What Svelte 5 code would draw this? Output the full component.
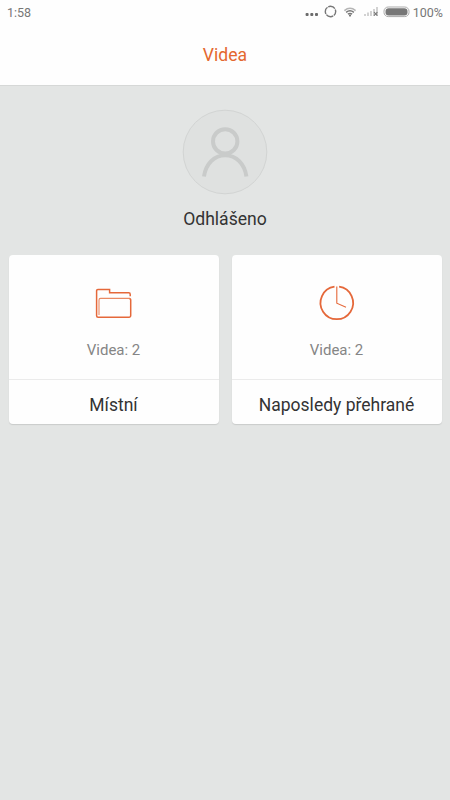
<script lang="ts">
	interface Card {
		icon: 'folder' | 'clock';
		count: number;
		title: string;
	}

	const cards: Card[] = [
		{ icon: 'folder', count: 2, title: 'Místní' },
		{ icon: 'clock', count: 2, title: 'Naposledy přehrané' }
	];
</script>

<div class="screen">
	<header>
		<div class="status">
			<span class="time">1:58</span>
			<!-- notification dots, sync, wifi, signal, battery -->
			<svg class="indicators" width="108" height="24" viewBox="302 0 108 24" aria-hidden="true">
				<g fill="#6c6c6c">
					<rect x="305.6" y="13" width="3" height="3" rx="0.9" />
					<rect x="310.3" y="13" width="3" height="3" rx="0.9" />
					<rect x="315" y="13" width="3" height="3" rx="0.9" />
				</g>
				<circle
					cx="330.5"
					cy="11.5"
					r="5.2"
					fill="none"
					stroke="#777"
					stroke-width="1.4"
					stroke-dasharray="7.4 0.77"
					stroke-dashoffset="3"
				/>
				<g fill="none" stroke-width="1.5">
					<path d="M344.4 10.6q5.6-4.6 11.2 0" stroke="#b5b5b5" />
					<path d="M346.1 12.3q3.9-3 7.8 0" stroke="#777" />
					<path d="M347.9 14.2q2.1-1.6 4.2 0" stroke="#777" />
				</g>
				<circle cx="350" cy="15.6" r="1.1" fill="#777" />
				<g fill="#d2d2d2">
					<rect x="364" y="14" width="2" height="2" />
					<rect x="367" y="12.5" width="2" height="3.5" />
					<rect x="370" y="11" width="2" height="5" />
					<rect x="373" y="9" width="2" height="7" />
					<rect x="376" y="7" width="2" height="9" />
				</g>
				<path d="M374 12.2l3.4 3.4M377.4 12.2l-3.4 3.4" stroke="#777" stroke-width="1.1" />
				<rect x="384" y="7" width="25" height="9.6" rx="4.2" fill="none" stroke="#aaa" />
				<rect x="385.5" y="8.2" width="22" height="7.2" rx="3.2" fill="#777" />
			</svg>
			<span class="battery">100%</span>
		</div>
		<h1>Videa</h1>
	</header>

	<section class="account">
		<svg width="86" height="86" viewBox="0 0 86 86" aria-hidden="true">
			<circle cx="43" cy="43" r="41.8" fill="#dfe1e0" stroke="#d2d4d3" />
			<g fill="none" stroke="#c9cbca" stroke-width="4">
				<circle cx="43.2" cy="32.4" r="12.2" />
				<path d="M22 67.5c1.7-12.6 10.3-21.3 21.2-21.3s19.5 8.7 21.2 21.3" />
			</g>
		</svg>
		<p>Odhlášeno</p>
	</section>

	<main>
		{#each cards as card}
			<article>
				<div class="summary">
					<svg width="40" height="40" viewBox="0 0 40 40" fill="none" aria-hidden="true">
						{#if card.icon === 'folder'}
							<path
								d="M36.2 13.2V11.2a1.4 1.4 0 0 0-1.4-1.4H15.6V6.5H3.9a1.3 1.3 0 0 0-1.3 1.3v24.9a1.5 1.5 0 0 0 1.5 1.5h31a1.6 1.6 0 0 0 1.6-1.6V17a1.6 1.6 0 0 0-1.6-1.6"
								stroke="#e5683a"
								stroke-width="1.5"
							/>
							<path d="M5 32V17a1.6 1.6 0 0 1 1.6-1.6h29" stroke="#e98a64" stroke-width="1.1" />
						{:else}
							<path
								d="M17.5 3.7A16.3 16.3 0 1 0 22.1 3.7"
								stroke="#e5683a"
								stroke-width="1.8"
							/>
							<path d="M19.8 3.5V20.2L29 24.3" stroke="#e5683a" stroke-width="1.1" />
						{/if}
					</svg>
					<span>Videa: {card.count}</span>
				</div>
				<h2>{card.title}</h2>
			</article>
		{/each}
	</main>
</div>

<style>
	:global(body) {
		margin: 0;
	}

	.screen {
		box-sizing: border-box;
		width: 450px;
		height: 800px;
		overflow: hidden;
		background: #e3e5e4;
		color: #333;
		font-family: Roboto, sans-serif;
	}

	header {
		box-sizing: border-box;
		height: 86px;
		border-bottom: 1px solid #d6d8d7;
		background: #fefefe;
	}

	.status {
		display: flex;
		align-items: center;
		height: 24px;
		padding: 0 7px;
		color: #777;
		font-size: 12.5px;
	}

	.indicators {
		margin-left: auto;
		margin-right: 3px;
	}

	h1,
	h2,
	p {
		margin: 0;
		font-weight: 400;
	}

	h1 {
		color: #e4682f;
		font-size: 17.6px;
		line-height: 62px;
		text-align: center;
	}

	.account {
		display: flex;
		flex-direction: column;
		align-items: center;
		height: 169px;
		padding-top: 23px;
		box-sizing: border-box;
	}

	.account p {
		font-size: 17.6px;
		line-height: 24px;
		margin-top: 12px;
	}

	main {
		display: grid;
		grid-template-columns: 1fr 1fr;
		gap: 13px;
		padding: 0 8.5px;
	}

	article {
		height: 169px;
		border-radius: 4px;
		background: #fefefe;
		box-shadow: 0 1px 1px #c9cbca;
	}

	.summary {
		display: flex;
		flex-direction: column;
		align-items: center;
		box-sizing: border-box;
		height: 125px;
		padding-top: 28px;
		border-bottom: 1px solid #ebebeb;
	}

	.summary span {
		margin-top: 17px;
		color: #858585;
		font-size: 15px;
		line-height: 20px;
	}

	h2 {
		font-size: 17.5px;
		line-height: 50px;
		text-align: center;
	}
</style>
